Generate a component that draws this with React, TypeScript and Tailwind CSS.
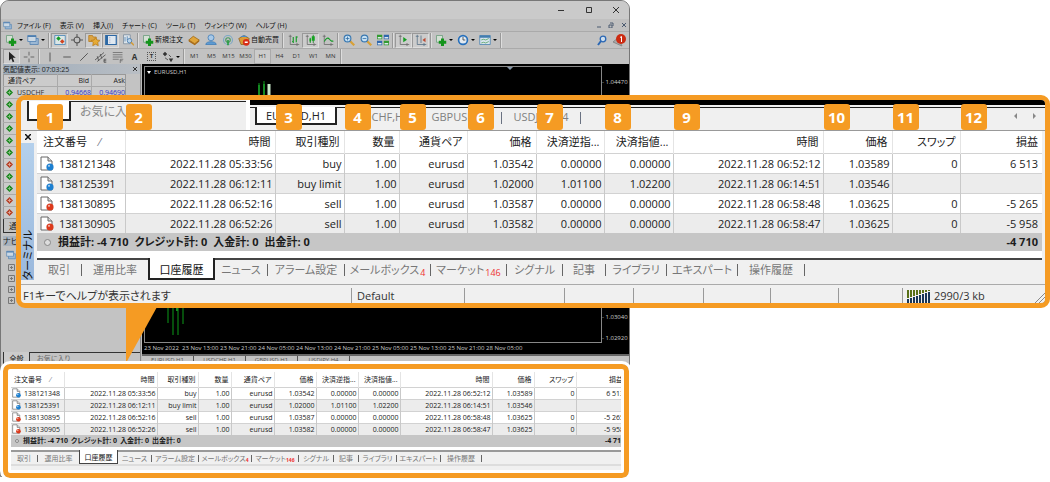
import clsx from "clsx"
import { FC, ReactNode } from "react"

type Size = "lg" | "sm"

const columns = [
  { label: "注文番号", lg: "w-[88px]", sm: "w-[53px]" },
  { label: "時間", lg: "w-[150px]", sm: "w-[93px]" },
  { label: "取引種別", lg: "w-[69px]", sm: "w-[41px]" },
  { label: "数量", lg: "w-[55px]", sm: "w-[33px]" },
  { label: "通貨ペア", lg: "w-[68px]", sm: "w-[43px]" },
  { label: "価格", lg: "w-[69px]", sm: "w-[42px]" },
  { label: "決済逆指...", lg: "w-[68px]", sm: "w-[42px]" },
  { label: "決済指値...", lg: "w-[69px]", sm: "w-[42px]" },
  { label: "時間", lg: "w-[150px]", sm: "w-[92px]" },
  { label: "価格", lg: "w-[69px]", sm: "w-[42px]" },
  { label: "スワップ", lg: "w-[68px]", sm: "w-[42px]" },
  { label: "損益", lg: "", sm: "" },
]

const orders = [
  ["138121348", "2022.11.28 05:33:56", "buy", "1.00", "eurusd", "1.03542", "0.00000", "0.00000", "2022.11.28 06:52:12", "1.03589", "0", "6 513"],
  ["138125391", "2022.11.28 06:12:11", "buy limit", "1.00", "eurusd", "1.02000", "1.01100", "1.02200", "2022.11.28 06:14:51", "1.03546", "", ""],
  ["138130895", "2022.11.28 06:52:16", "sell", "1.00", "eurusd", "1.03587", "0.00000", "0.00000", "2022.11.28 06:58:48", "1.03625", "0", "-5 265"],
  ["138130905", "2022.11.28 06:52:26", "sell", "1.00", "eurusd", "1.03582", "0.00000", "0.00000", "2022.11.28 06:58:47", "1.03625", "0", "-5 958"],
]

const terminalTabs = [
  { label: "取引", lg: "w-[45px]", sm: "w-[27px]" },
  { label: "運用比率", lg: "w-[66px]", sm: "w-[41px]" },
  { label: "口座履歴", lg: "w-[67px]", sm: "w-[39px]", active: true },
  { label: "ニュース", lg: "w-[53px]", sm: "w-[34px]" },
  { label: "アラーム設定", lg: "w-[77px]", sm: "w-[47px]" },
  { label: "メールボックス", lg: "w-[86px]", sm: "w-[53px]", count: "4" },
  { label: "マーケット", lg: "w-[76px]", sm: "w-[47px]", count: "146" },
  { label: "シグナル", lg: "w-[56px]", sm: "w-[35px]" },
  { label: "記事", lg: "w-[43px]", sm: "w-[25px]" },
  { label: "ライブラリ", lg: "w-[61px]", sm: "w-[38px]" },
  { label: "エキスパート", lg: "w-[71px]", sm: "w-[44px]" },
  { label: "操作履歴", lg: "w-[67px]", sm: "w-[41px]" },
]

const OrderIcon: FC<{ color: string; className: string }> = ({ color, className }) => (
  <svg viewBox="0 0 14 15" className={className}>
    <path d="M1 1h7l4 4v9H1z" fill="#fff" stroke="#666" />
    <path d="M8 1v4h4" fill="#ddd" stroke="#666" />
    <circle cx="10" cy="11" r="3.6" fill={color} />
    <circle cx="9" cy="9.8" r="1.1" fill="#fff" opacity=".6" />
  </svg>
)

const OrderTable: FC<{ size: Size }> = ({ size }) => {
  const lg = size === "lg"
  return (
    <table
      className={clsx("table-fixed border-collapse text-right text-[#222]", lg ? "w-full text-[11px]" : "w-[calc(100%+4px)] text-[7px]")}
    >
      <colgroup>
        {columns.map((c, i) => (
          <col key={i} className={c[size]} />
        ))}
      </colgroup>
      <thead>
        <tr className={clsx("bg-white", lg ? "h-[22px]" : "h-[15px]")}>
          {columns.map((c, i) => (
            <th
              key={i}
              scope="col"
              className={clsx(
                "relative border-r border-[#e4e4e4] p-0 font-normal leading-none whitespace-nowrap last:border-r-0",
                lg ? "pr-1" : "pr-[2px]",
                i === 0 && (lg ? "pl-[6px] text-left" : "pl-[3px] text-left")
              )}
            >
              {lg && (
                <span className="absolute -top-[27px] left-0 z-10 flex size-[26px] items-center justify-center rounded-[3px] bg-[#f59b23] text-[15px] font-bold text-white">
                  {i + 1}
                </span>
              )}
              {c.label}
              {i === 0 && <span className={clsx("text-gray-500", lg ? "ml-3" : "ml-2")}>⁄</span>}
            </th>
          ))}
        </tr>
      </thead>
      <tbody>
        {orders.map((row, r) => (
          <tr key={row[0]} className={clsx("border-t border-[#d2d2d2]", lg ? "h-5" : "h-3", r % 2 ? "bg-[#ececec]" : "bg-white")}>
            {row.map((cell, i) => (
              <td
                key={i}
                className={clsx(
                  "border-r border-[#c9c9c9] p-0 leading-none whitespace-nowrap last:border-r-0",
                  lg ? "pr-[2px] last:pr-1" : "pr-px"
                )}
              >
                {i === 0 ? (
                  <span className={clsx("flex items-center", lg ? "gap-[5px] pl-[3px]" : "gap-[3px] pl-px")}>
                    <OrderIcon color={r < 2 ? "#1c7fd0" : "#dc3a1c"} className={lg ? "h-[15px] w-[14px]" : "h-[10px] w-[9px]"} />
                    {cell}
                  </span>
                ) : (
                  cell
                )}
              </td>
            ))}
          </tr>
        ))}
      </tbody>
    </table>
  )
}

const Summary: FC<{ size: Size }> = ({ size }) => (
  <div
    className={clsx(
      "flex items-center bg-[#c6c6c6] font-bold whitespace-nowrap text-[#1c1c1c]",
      size === "lg" ? "h-[18px] pr-1 text-[11px]" : "h-3 w-[calc(100%+4px)] text-[7px]"
    )}
  >
    <span className={clsx("flex shrink-0 justify-center", size === "lg" ? "w-[21px]" : "w-3")}>
      <i className={clsx("rounded-full border border-[#888] bg-[#ddd]", size === "lg" ? "size-[7px]" : "size-1")} />
    </span>
    <span className={clsx("flex", size === "lg" ? "gap-[6px]" : "gap-[3px]")}>
      <span>損益計: -4 710</span>
      <span>クレジット計: 0</span>
      <span>入金計: 0</span>
      <span>出金計: 0</span>
    </span>
    <span className="ml-auto">-4 710</span>
  </div>
)

const TerminalTabs: FC<{ size: Size }> = ({ size }) => {
  const lg = size === "lg"
  return (
    <div
      role="tablist"
      className={clsx("flex", lg ? "h-[22px] border-t-2 border-[#444] text-[11px]" : "h-[14px] border-t-2 border-[#999] text-[7px]")}
    >
      {terminalTabs.map((t, i) => (
        <button
          key={t.label}
          role="tab"
          aria-selected={!!t.active}
          className={clsx(
            "flex shrink-0 items-center justify-center leading-none whitespace-nowrap",
            t[size],
            !t.active && (lg ? "h-[19px] text-[#777]" : "h-3 text-[#777]"),
            t.active && "-mt-[2px] bg-white text-[#111]",
            t.active && (lg ? "h-[22px] border-x-2 border-b-2 border-[#222] pt-[3px]" : "h-[14px] border-x border-b border-[#444] pt-[2px]")
          )}
        >
          <span className="grow">
            {t.label}
            {t.count && (
              <sub className={clsx("text-[#e33]", lg ? "ml-px text-[9px]" : "text-[5px] font-bold")}>{t.count}</sub>
            )}
          </span>
          {!t.active && i !== 1 && <i className={clsx("w-px bg-[#666]", lg ? "h-3" : "h-[7px]")} />}
        </button>
      ))}
    </div>
  )
}

const statusCells = ["w-[113px]", "w-[100px]", "w-[69px]", "w-[70px]", "w-[67px]", "w-[68px]", "w-[64px]"]

const Callout: FC = () => (
  <section className="absolute top-[95px] right-0 left-4 overflow-hidden rounded-[9px] border-5 border-[#f59b23] bg-[#f0f0f0] text-[11px]">
    <div className="flex h-[30px]">
      <div className="flex w-[229px] shrink-0 items-start border-r-4 border-white bg-[#efefef] pt-px pl-[6px] text-[#888]">
        <i className="h-5 w-11 border-x-2 border-b-2 border-[#222] bg-white" />
        <span className="grow border-t border-[#222] pt-[2px] pl-[9px] text-[12px] leading-[16px]">お気に入り</span>
      </div>
      <div className="flex grow flex-col">
        <div className="h-[5px] bg-black" />
        <div className="mt-[2px] flex border-t border-[#222] pl-[5px] leading-[17px] text-[#808080]">
          <button className="-mt-px h-[18px] w-[82px] border-x-2 border-b-2 border-[#222] bg-white leading-[15px] text-[#222]">EURUSD,H1</button>
          <button className="h-[17px] w-[82px] pl-[3px]">USDCHF,H1</button>
          <button className="h-[17px] w-[82px] pl-1">GBPUSD,H1</button>
          <i className="mt-1 h-3 w-px bg-gray-500" />
          <button className="h-[17px] w-[78px]">USDJPY,H4</button>
          <i className="mt-1 h-3 w-px bg-gray-500" />
          <svg viewBox="0 0 24 8" className="mt-1 mr-2 ml-auto h-2 w-6" fill="#888">
            <path d="M4 1v6L1 4zM20 1v6l3-3z" />
          </svg>
        </div>
      </div>
    </div>
    <div className="flex border-t border-[#999]">
      <div className="flex w-4 shrink-0 flex-col items-start">
        <button aria-label="閉じる" className="flex h-3 w-[14px] items-center justify-center">
          <svg viewBox="0 0 6 6" className="size-[6px]" stroke="#111" strokeWidth="1.5">
            <path d="M0 0l6 6M6 0L0 6" />
          </svg>
        </button>
        <div className="flex w-[13px] grow items-start justify-center overflow-hidden bg-linear-to-b from-[#b4d0ec] to-[#9ab8dc]">
          <span className="mt-auto rotate-180 leading-[13px] whitespace-nowrap text-[#111] [text-orientation:sideways] [writing-mode:vertical-rl]">ターミナル</span>
        </div>
      </div>
      <div className="mr-[3px] grow">
        <OrderTable size="lg" />
        <Summary size="lg" />
        <div className="h-[7px] bg-white" />
        <TerminalTabs size="lg" />
      </div>
    </div>
    <div className="mt-1 flex h-[19px] items-end border-t border-[#aaa] text-[#333]">
      <span className="h-[15px] w-[330px] shrink-0 pt-px pl-[2px] leading-[14px]">F1キーでヘルプが表示されます</span>
      {statusCells.map((w, i) => (
        <span key={w} className={clsx("h-[15px] border-l border-[#999] pt-px pl-[5px] leading-[14px]", w)}>
          {i === 0 && "Default"}
        </span>
      ))}
      <span className="flex h-[15px] grow items-center gap-1 border-l border-[#999] pt-px pl-1 leading-[14px]">
        <svg viewBox="0 0 23 13" className="h-[13px] w-[23px]">
          {[0, 1, 2, 3, 4, 5, 6, 7].map((n) => (
            <g key={n}>
              <rect x={n * 3} width="2" height={8 - n} fill="#587018" />
              <rect x={n * 3} y={9 - n} width="2" height={4 + n} fill="#173659" />
            </g>
          ))}
        </svg>
        2990/3 kb
        <svg viewBox="0 0 10 10" className="ml-auto size-[10px] self-end" stroke="#888">
          <path d="M0 10L10 0M4 10l6-6M8 10l2-2" />
        </svg>
      </span>
    </div>
  </section>
)

const Highlight: FC = () => (
  <section className="absolute top-[364px] left-[3px] w-[626px] rounded-[7px] border-5 border-[#f59b23] bg-white p-[3px] outline-3 outline-white">
    <div className="overflow-hidden">
      <OrderTable size="sm" />
      <Summary size="sm" />
      <div className="h-[3px]" />
      <div className="bg-[#f0f0f0]">
        <TerminalTabs size="sm" />
        <div className="h-[6px] border-t-2 border-[#ddd]" />
      </div>
    </div>
  </section>
)

// Toolbar glyphs, all drawn on a 16 unit grid
const glyphs: Record<string, ReactNode> = {
  addChart: (
    <>
      <path d="M2 2h8v9H2z" fill="#d4e0d4" stroke="#697" />
      <path d="M8 6h4v3h3v4h-3v3H8v-3H5V9h3z" fill="#14941c" />
    </>
  ),
  windows: (
    <>
      <path d="M4 6h11v8H4z" fill="#9cb8d4" stroke="#4d7eb0" />
      <path d="M1 2h11v8H1z" fill="#cbd8e4" stroke="#4d7eb0" />
      <path d="M1 2h11v2H1z" fill="#4d7eb0" />
    </>
  ),
  market: (
    <>
      <path d="M1 2h14v12H1z" fill="#dce6e6" stroke="#3d7fb4" />
      <path d="M3 6l3-3 3 3-3 3z" fill="#149a26" />
      <path d="M8 10l3-3 3 3-3 3z" fill="#cf4320" />
    </>
  ),
  target: (
    <g fill="none" stroke="#555" strokeWidth="1.4">
      <circle cx="8" cy="8" r="4" />
      <path d="M8 0v5M8 11v5M0 8h5M11 8h5" />
    </g>
  ),
  favorites: (
    <>
      <path d="M1 2h5l1 2h4v6H1z" fill="#dba444" stroke="#b67a1b" />
      <path d="M10 5l2 3 4 .5-3 3 .7 4-3.700-2-3.700 2 .7-4-3-3 4-.5z" fill="#e6ab36" stroke="#b67a1b" />
    </>
  ),
  panel: (
    <>
      <path d="M1 2h14v12H1z" fill="#dfe8f0" stroke="#2d68a4" strokeWidth="1.6" />
      <path d="M1 2h3v12H1z" fill="#2d68a4" />
      <path d="M6 5h1M6 8h1M6 11h1" stroke="#66a" />
    </>
  ),
  tester: (
    <>
      <path d="M2 1h9v12H2z" fill="#dce4ea" stroke="#789" />
      <path d="M4 4v6M7 3v5" stroke="#4a7fb0" />
      <circle cx="10" cy="9" r="3" fill="#b9d4ea" stroke="#376fa6" />
      <path d="M12 11l4 4" stroke="#d29a35" strokeWidth="2" />
    </>
  ),
  book: (
    <>
      <path d="M1 8l6-5 8 5-6 5z" fill="#e0a53a" stroke="#9c6410" />
      <path d="M1 8v2l8 5 6-5V8l-6 5z" fill="#a96a14" />
    </>
  ),
  person: (
    <>
      <circle cx="8" cy="5" r="4" fill="#a8c9e8" stroke="#3b79b6" />
      <path d="M1 14c0-5 14-5 14 0z" fill="#5e9bd2" stroke="#3b79b6" />
    </>
  ),
  signal: (
    <g fill="none">
      <circle cx="8" cy="8" r="6" stroke="#7ba8c4" strokeWidth="1.5" />
      <circle cx="8" cy="8" r="3" stroke="#489a62" strokeWidth="1.5" />
      <path d="M8 8v7" stroke="#1c9a36" strokeWidth="2" />
    </g>
  ),
  stop: (
    <>
      <path d="M1 6l7-4 7 4-3 8H4z" fill="#db9b36" stroke="#8b6122" />
      <path d="M3 4q5-5 10 0z" fill="#4b8bc6" />
      <circle cx="11" cy="11" r="4.500" fill="#d92d17" />
      <path d="M9 10h4v2H9z" fill="#fff" />
    </>
  ),
  bars: (
    <>
      <path d="M3 1v13h12M1 3h4M12 12v4" fill="none" stroke="#666" />
      <path d="M7 4v8M5.500 10H7M11 3v8M11 4h2" stroke="#149a26" strokeWidth="1.500" />
    </>
  ),
  candles: (
    <>
      <path d="M3 1v13h12M1 3h4M12 12v4" fill="none" stroke="#666" />
      <path d="M7 5v7M11 1v11" stroke="#087812" />
      <path d="M6 6h2v4H6zM9 3h4v6H9z" fill="#15a321" />
    </>
  ),
  line: (
    <>
      <path d="M3 1v13h12M1 3h4M12 12v4" fill="none" stroke="#666" />
      <path d="M3 10q4-7 7-3t5 2" fill="none" stroke="#149a26" strokeWidth="1.500" />
    </>
  ),
  zoomIn: (
    <>
      <path d="M9 9l6 6" stroke="#d8a036" strokeWidth="3" />
      <circle cx="6" cy="6" r="4.500" fill="#c4dff2" stroke="#3978b1" strokeWidth="1.500" />
      <path d="M3.500 6h5M6 3.500v5" stroke="#2d69a1" />
    </>
  ),
  zoomOut: (
    <>
      <path d="M9 9l6 6" stroke="#d8a036" strokeWidth="3" />
      <circle cx="6" cy="6" r="4.500" fill="#c4dff2" stroke="#3978b1" strokeWidth="1.500" />
      <path d="M3.500 6h5" stroke="#2d69a1" />
    </>
  ),
  tiles: (
    <>
      <path d="M0 1h7v6H0zM9 9h7v6H9z" fill="#339b31" />
      <path d="M9 1h7v6H9zM0 9h7v6H0z" fill="#2f68ad" />
      <path d="M1 4h5v2H1zM10 4h5v2h-5zM1 12h5v2H1zM10 12h5v2h-5z" fill="#dce7ef" />
    </>
  ),
  scroll: (
    <>
      <path d="M3 1v13h12M1 3h4M12 12v4" fill="none" stroke="#666" />
      <path d="M7 4l5 3.500L7 11z" fill="#159d22" />
    </>
  ),
  shift: (
    <>
      <path d="M3 1v13h12M1 3h4M8 2v10M12 12v4" fill="none" stroke="#526b82" />
      <path d="M14 5l-4 3 4 3z" fill="#bc4930" />
    </>
  ),
  clock: (
    <>
      <circle cx="8" cy="8" r="7" fill="#2770bc" />
      <circle cx="8" cy="8" r="4.800" fill="#e3eaf0" />
      <path d="M8 4v4h3" fill="none" stroke="#333" />
    </>
  ),
  template: (
    <>
      <path d="M1 2h14v12H1z" fill="#d9e5ee" stroke="#427daf" />
      <path d="M1 2h14v3H1z" fill="#427daf" />
      <path d="M3 8l3-1 3 1 4-2M3 12l3-1 3 1 4-2" fill="none" stroke="#4a9c57" />
    </>
  ),
  cursor: <path d="M4 1v12l3-3 2 5 2-1-2-5h4z" fill="#222" />,
  cross: <path d="M8 1v5M8 10v5M1 8h5M10 8h5" stroke="#666" strokeWidth="1.300" />,
  vline: <path d="M8 2v12" stroke="#555" strokeWidth="1.300" />,
  hline: <path d="M3 8h10" stroke="#555" strokeWidth="1.300" />,
  trend: <path d="M3 13L13 3" stroke="#555" strokeWidth="1.300" />,
  channel: <path d="M0 12L12 2M3 14L14 5M3 7l2 6M7 4l2 6M12 11h3M12 13h3M12 15h3M12 11v4" stroke="#444" />,
  fibo: <path d="M1 2h13M1 5h13M1 8h13M1 11h8M11 11h4M11 13h3M11 11v5" stroke="#666" />,
  shapes: (
    <>
      <path d="M1 4l3-3 3 3-3 3zM9 10l3 5 3-5z" fill="#333" />
      <path d="M4 9l4 3M9 5l3 3" stroke="#333" />
    </>
  ),
}

const Tool: FC<{ icon: string; on?: boolean; menu?: boolean }> = ({ icon, on, menu }) => (
  <button
    aria-label={icon}
    className={clsx(
      "flex h-[15px] shrink-0 items-center justify-center",
      menu ? "w-[22px] gap-[2px]" : "w-[17px]",
      on && "border border-t-[#999] border-r-[#ddd] border-b-[#ddd] border-l-[#999] bg-[#ccc]"
    )}
  >
    <svg viewBox="0 0 16 16" className="size-3 shrink-0">
      {glyphs[icon]}
    </svg>
    {menu && <i className="border-x-2 border-t-2 border-x-transparent border-t-black" />}
  </button>
)

const Divider: FC = () => <i className="mx-px h-[15px] w-[2px] shrink-0 border-l border-[#999] bg-[#ddd]" />

const menus = ["ファイル (F)", "表示 (V)", "挿入(I)", "チャート (C)", "ツール (T)", "ウィンドウ (W)", "ヘルプ (H)"]
const periods = ["M1", "M5", "M15", "M30", "H1", "H4", "D1", "W1", "MN"]

const Toolbars: FC = () => (
  <>
    <div className="flex h-[18px] items-center justify-end bg-[#cacaca] pr-[9px]">
      <svg viewBox="0 0 64 8" className="h-2 w-16" fill="none" stroke="#333">
        <path d="M2 4.500h6M30.500 1.500h5v5h-5zM57 1l6 6M63 1l-6 6" />
      </svg>
    </div>
    <nav className="flex h-3 items-center gap-[9px] bg-[#c0c0c0] pl-[2px] text-[7px] leading-none whitespace-nowrap text-[#111]">
      <svg viewBox="0 0 16 16" className="-mr-1 size-[9px]">
        {glyphs.windows}
      </svg>
      {menus.map((m) => (
        <button key={m}>{m}</button>
      ))}
      <svg viewBox="0 0 30 6" className="mr-[3px] ml-auto h-[6px] w-[30px]" fill="none" stroke="#4a5a70">
        <path d="M1 5h4M13 3h3v3h-3zM14 1h3v3M26 1l4 4M30 1l-4 4" />
      </svg>
    </nav>
    <div className="flex h-[17px] items-center border-t border-[#aaa] bg-[#c2c2c2] pl-[2px] text-[7px] whitespace-nowrap text-[#111]">
      <Tool icon="addChart" menu />
      <Tool icon="windows" menu />
      <Divider />
      <Tool icon="market" on />
      <Tool icon="target" />
      <Tool icon="favorites" on />
      <Tool icon="panel" on />
      <Tool icon="tester" />
      <Divider />
      <button className="flex items-center px-[2px]">
        <svg viewBox="0 0 16 16" className="mr-px size-3">
          {glyphs.addChart}
        </svg>
        新規注文
      </button>
      <Tool icon="book" />
      <Tool icon="person" />
      <Tool icon="signal" />
      <button className="flex items-center px-[2px]">
        <svg viewBox="0 0 16 16" className="mr-px size-3">
          {glyphs.stop}
        </svg>
        自動売買
      </button>
      <Divider />
      <Tool icon="bars" />
      <Tool icon="candles" on />
      <Tool icon="line" />
      <Divider />
      <Tool icon="zoomIn" />
      <Tool icon="zoomOut" />
      <Tool icon="tiles" />
      <Divider />
      <Tool icon="scroll" on />
      <Tool icon="shift" on />
      <Divider />
      <Tool icon="addChart" menu />
      <Tool icon="clock" menu />
      <Tool icon="template" menu />
      <Divider />
      <svg viewBox="0 0 30 14" className="mr-[2px] ml-auto h-[14px] w-[30px]">
        <path d="M4 8l-3 4" stroke="#2c68b4" strokeWidth="2" />
        <circle cx="6" cy="6" r="2.800" fill="#cfdfee" stroke="#2c68b4" strokeWidth="1.300" />
        <path d="M16 9l5-4 4 8z" fill="#aaa" stroke="#888" />
        <circle cx="24" cy="6" r="5" fill="#cc2b12" />
        <path d="M23 4.500l1.500-1V9" fill="none" stroke="#fff" />
      </svg>
    </div>
    <div className="flex h-4 items-center border-t border-[#aaa] bg-[#c2c2c2] pl-[2px] text-[6px] text-[#333]">
      <Tool icon="cursor" on />
      <Tool icon="cross" />
      <Divider />
      <Tool icon="vline" />
      <Tool icon="hline" />
      <Tool icon="trend" />
      <Tool icon="channel" />
      <Tool icon="fibo" />
      <button className="w-[17px] text-[8px] font-bold">A</button>
      <button className="flex w-[17px] justify-center">
        <span className="size-[9px] border border-dotted border-[#555] leading-[7px] font-bold">T</span>
      </button>
      <Tool icon="shapes" menu />
      <Divider />
      {periods.map((p) => (
        <button key={p} className={clsx("h-[15px] w-[17px]", p === "H1" && "border border-[#aaa] bg-[#ccc]")}>
          {p}
        </button>
      ))}
      <Divider />
    </div>
  </>
)

const rising = [true, true, true, true, true, true, false, true, true, false, false]

const SidePanel: FC = () => (
  <aside className="flex w-[140px] shrink-0 flex-col border-r border-[#888] bg-[#c3c3c3] pl-[2px] text-[8px] whitespace-nowrap text-[#222]">
    <div className="flex h-[10px] items-center justify-between bg-linear-to-r from-[#9eacba] to-[#b9bec4] pr-[3px] text-[7px] leading-none">
      気配値表示: 07:03:25
      <svg viewBox="0 0 5 5" className="size-1" stroke="#111">
        <path d="M0 0l5 5M5 0L0 5" />
      </svg>
    </div>
    <table className="w-[123px] table-fixed border-collapse border border-[#999] bg-[#cbcbcb] text-right text-[7px] leading-none">
      <thead>
        <tr className="h-3">
          <th scope="col" className="w-[54px] p-0 pl-1 text-left font-normal">通貨ペア</th>
          <th scope="col" className="border-l border-[#aaa] p-0 pr-[2px] font-normal">Bid</th>
          <th scope="col" className="border-l border-[#aaa] p-0 font-normal">Ask</th>
        </tr>
      </thead>
      <tbody>
        {rising.map((up, i) => (
          <tr key={i} className="h-3 border-t border-[#aaa] text-[#33c]">
            <td className="p-0 pl-[2px]">
              <span className="flex items-center gap-1 text-[#333]">
                <svg viewBox="0 0 8 8" className="size-[7px]">
                  <path d="M4 0l4 4-4 4-4-4z" fill={up ? "#16861b" : "#b43b20"} />
                  <path d="M4 2v4M2 4h4" stroke={up ? "#8bc187" : "#e0a898"} />
                </svg>
                {i === 0 && "USDCHF"}
              </span>
            </td>
            <td className="border-l border-[#aaa] p-0">{i === 0 && "0.94668"}</td>
            <td className="border-l border-[#aaa] p-0">{i === 0 && "0.94690"}</td>
          </tr>
        ))}
      </tbody>
    </table>
    <div className="flex h-[17px] items-start">
      <button className="h-[14px] w-[50px] border-x border-b border-[#333] pl-[5px] text-left">通</button>
    </div>
    <div className="h-[10px] bg-[#a8b2bd] leading-[10px]">ナビ</div>
    <div className="flex grow flex-col gap-1 pt-1 pl-[3px]">
      <svg viewBox="0 0 16 16" className="size-[10px]">
        {glyphs.windows}
      </svg>
      {[0, 1, 2, 3].map((n) => (
        <svg key={n} viewBox="0 0 7 7" className="ml-[2px] size-[7px]" fill="none" stroke="#777">
          <path d="M.5.5h6v6h-6zM2 3.500h3M3.500 2v3" />
        </svg>
      ))}
    </div>
    <div className="flex h-3 text-[7px] leading-none">
      <button className="w-[27px] border-x border-[#333] bg-[#ccc]">全般</button>
      <button className="grow border-t border-[#333] pl-[7px] text-left text-[#666]">お気に入り</button>
    </div>
  </aside>
)

const dates = ["23 Nov 2022", "23 Nov 13:00", "23 Nov 21:00", "24 Nov 05:00", "24 Nov 13:00", "24 Nov 21:00", "25 Nov 05:00", "25 Nov 13:00", "25 Nov 21:00", "28 Nov 05:00"]

const Chart: FC = () => (
  <div className="flex min-w-0 grow flex-col bg-[#bbb] pl-px">
    <div className="flex grow flex-col border-b-2 border-[#666] bg-black pt-[2px] pl-[2px] text-[6px] text-[#ccc]">
      <div className="flex h-[277px]">
        <div className="relative grow border border-[#888] pt-[2px] pl-[2px]">
          <span className="flex items-center gap-[3px] leading-none">
            <i className="border-x-2 border-t-3 border-x-transparent border-t-white" />
            EURUSD,H1
          </span>
          <svg viewBox="0 0 456 275" className="absolute inset-0 size-full" preserveAspectRatio="none">
            <path d="M114 16v20M119 14v22M23 235v21M28 235v33M33 235v33M38 235v22" stroke="#064d0c" strokeWidth="2" />
            <path d="M114 18v18M119 17v20M32 240v4" stroke="#138a21" strokeWidth="2" />
            <path d="M124 17v20" stroke="#c9e8c9" strokeWidth="3" />
            <path d="M362 0h6l-3 3z" fill="#8798aa" />
          </svg>
        </div>
        <div className="flex w-[27px] shrink-0 flex-col pt-3">
          <span>- 1.04470</span>
          <span className="mt-auto">- 1.03040</span>
          <span className="mt-3">- 1.02920</span>
        </div>
      </div>
      <div className="flex leading-[11px] whitespace-nowrap">
        {dates.map((d) => (
          <span key={d} className="w-[38px] shrink-0">
            {d}
          </span>
        ))}
      </div>
    </div>
    <div className="flex h-2 bg-[#c3c3c3] text-[6px] text-[#555]">
      {["EURUSD,H1", "USDCHF,H1", "GBPUSD,H1", "USDJPY,H4"].map((t) => (
        <button key={t} className="w-[52px] border-r border-[#555] leading-[8px]">
          {t}
        </button>
      ))}
    </div>
  </div>
)

export default function App() {
  return (
    <main className="relative bg-white pb-1 font-['Open_Sans','Noto_Sans_CJK_JP',sans-serif] [font-feature-settings:'palt']">
      <div className="w-[60%] overflow-hidden rounded-t-[9px] border border-[#777] bg-[#c3c3c3]">
        <Toolbars />
        <div className="flex h-[300px]">
          <SidePanel />
          <Chart />
        </div>
        <div className="h-28" />
      </div>
      <Callout />
      <svg viewBox="0 0 31 56" className="absolute top-[307px] left-[126px] h-14 w-[31px]">
        <path d="M0 0h31L0 56z" fill="#f59b23" />
      </svg>
      <Highlight />
    </main>
  )
}
